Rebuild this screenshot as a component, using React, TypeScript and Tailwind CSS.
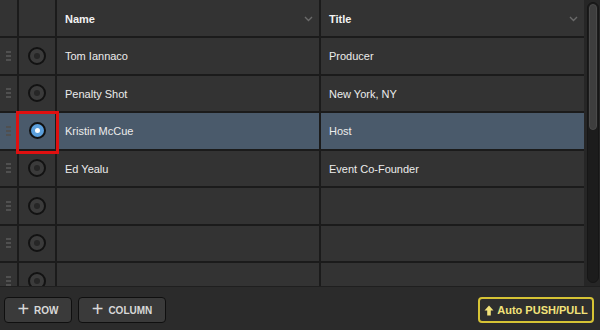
import React from "react";

type Row = { name: string; title: string };

const ROWS: Row[] = [
  { name: "Tom Iannaco", title: "Producer" },
  { name: "Penalty Shot", title: "New York, NY" },
  { name: "Kristin McCue", title: "Host" },
  { name: "Ed Yealu", title: "Event Co-Founder" },
  { name: "", title: "" },
  { name: "", title: "" },
  { name: "", title: "" },
];

const SELECTED = 2;

function Chevron() {
  return (
    <svg width="9" height="6" viewBox="0 0 9 6" className="shrink-0">
      <path d="M1 1l3.5 3.5L8 1" fill="none" stroke="#6a6a6a" strokeWidth="1.4" />
    </svg>
  );
}

function Grip() {
  return (
    <div className="flex flex-col gap-[2px]">
      <div className="w-[5px] h-[2px] bg-[#505050]" />
      <div className="w-[5px] h-[2px] bg-[#505050]" />
      <div className="w-[5px] h-[2px] bg-[#505050]" />
    </div>
  );
}

function Radio({ on }: { on: boolean }) {
  if (on) {
    return (
      <div className="w-[17px] h-[17px] rounded-full border-2 border-[#111] bg-[#5b9fdc] flex items-center justify-center">
        <div className="w-[5px] h-[5px] rounded-full bg-white" />
      </div>
    );
  }
  return (
    <div className="w-[18px] h-[18px] rounded-full border-2 border-[#121212] bg-[#3b3b3b] flex items-center justify-center">
      <div className="w-[6px] h-[6px] rounded-full bg-[#262626]" />
    </div>
  );
}

export default function App() {
  return (
    <div
      className="w-[600px] h-[330px] bg-[#1b1b1b] flex flex-col overflow-hidden text-[#ececec]"
      style={{ fontFamily: '"Liberation Sans", Arial, sans-serif' }}
    >
      <div className="flex h-[286px]">
        <div className="w-[584px] h-[286px] overflow-hidden flex flex-col gap-[2px]">
          {/* header */}
          <div className="flex gap-[2px] h-[36px] shrink-0">
            <div className="w-[17px] bg-[#333333]" />
            <div className="w-[36px] bg-[#333333]" />
            <div className="w-[262px] bg-[#333333] flex items-center justify-between pl-[8px] pr-[6px] pt-[2px]">
              <span className="text-[11px] font-bold text-[#f2f2f2]">Name</span>
              <Chevron />
            </div>
            <div className="w-[263px] bg-[#333333] flex items-center justify-between pl-[8px] pr-[6px] pt-[2px]">
              <span className="text-[11px] font-bold text-[#f2f2f2]">Title</span>
              <Chevron />
            </div>
          </div>
          {ROWS.map((r, i) => {
            const sel = i === SELECTED;
            const bg = sel ? "bg-[#4a5a6b]" : "bg-[#333333]";
            return (
              <div key={i} className="flex gap-[2px] h-[35.5px] shrink-0">
                <div className={`w-[17px] ${bg} flex items-center justify-center`}>
                  <Grip />
                </div>
                <div className={`w-[36px] ${bg} flex items-center justify-center relative`}>
                  <Radio on={sel} />
                  {sel && (
                    <div className="absolute z-10 left-[-3px] right-[-4px] top-[-2px] bottom-[-5px] border-[3px] border-[#e01010]" />
                  )}
                </div>
                <div className={`w-[262px] ${bg} flex items-center pl-[8px] pt-[1px] text-[11px]`}>{r.name}</div>
                <div className={`w-[263px] ${bg} flex items-center pl-[8px] pt-[1px] text-[11px]`}>{r.title}</div>
              </div>
            );
          })}
        </div>
        {/* scrollbar */}
        <div className="w-[16px] h-[286px] pl-[3px] pr-[1px] pt-[2px] pb-[3px] bg-[#262626]">
          <div className="w-full h-full rounded-full bg-[#1c1c1c] border border-[#161616] p-[1px]">
            <div className="w-full h-[126px] rounded-full bg-[#3e3e3e] border border-[#4a4a4a]" />
          </div>
        </div>
      </div>
      {/* footer */}
      <div className="flex-1 bg-[#2b2b2b] border-t border-[#1f1f1f] flex items-start justify-between px-[4px] pt-[10px]">
        <div className="flex gap-[6px]">
          <button className="w-[68px] h-[26px] rounded-[4px] border border-[#0f0f0f] bg-[#3a3a3a] flex items-center justify-center gap-[5px] text-[#d8d8d8]">
            <span className="text-[20px] font-light leading-none mt-[-2px]">+</span>
            <span className="text-[10px] font-bold">ROW</span>
          </button>
          <button className="w-[88px] h-[26px] rounded-[4px] border border-[#0f0f0f] bg-[#3a3a3a] flex items-center justify-center gap-[5px] text-[#d8d8d8]">
            <span className="text-[20px] font-light leading-none mt-[-2px]">+</span>
            <span className="text-[10px] font-bold">COLUMN</span>
          </button>
        </div>
        <button className="w-[116px] h-[26px] mr-[2px] rounded-[4px] border-2 border-[#d6c335] bg-[#2e2e2e] flex items-center justify-center gap-[3px] text-[#f2e27a]">
          <svg width="10" height="11" viewBox="0 0 10 11">
            <path d="M5 0.5L9.5 5.5H6.8V10.5H3.2V5.5H0.5Z" fill="#f2e27a" />
          </svg>
          <span className="text-[11px] font-bold">Auto PUSH/PULL</span>
        </button>
      </div>
    </div>
  );
}
